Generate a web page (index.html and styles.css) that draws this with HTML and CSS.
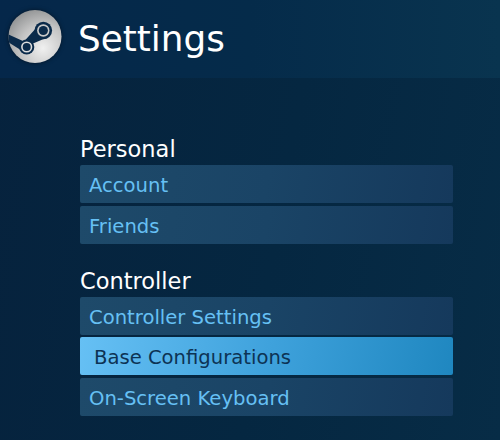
FILE: index.html
```html
<!DOCTYPE html>
<html lang="en">
<head>
<meta charset="utf-8">
<title>Settings</title>
<link rel="stylesheet" href="styles.css">
</head>
<body>
<header class="header">
  <svg class="logo" viewBox="3 7 64 64" aria-hidden="true">
    <defs>
      <radialGradient id="disc" cx="65%" cy="72%" r="80%">
        <stop offset="0" stop-color="#f0f0f0"/>
        <stop offset="0.55" stop-color="#c4c4c4"/>
        <stop offset="1" stop-color="#8d8f90"/>
      </radialGradient>
      <clipPath id="disc-clip">
        <circle cx="35" cy="36.5" r="26.5"/>
      </clipPath>
    </defs>
    <circle cx="35" cy="36.5" r="26.5" fill="url(#disc)"/>
    <g clip-path="url(#disc-clip)">
      <path d="M5 33 L24 41.5 L37 27 L46 38 L33 43.5 L33 50 L20.7 50 L5 40 Z" fill="#0a2a4a"/>
    </g>
    <circle cx="43.3" cy="30.5" r="8.8" fill="#0a2a4a"/>
    <circle cx="43.3" cy="30.5" r="6.2" fill="#c9c9c9"/>
    <circle cx="43.3" cy="30.5" r="4.6" fill="#0a2a4a"/>
    <circle cx="26.7" cy="47" r="7.6" fill="#0a2a4a"/>
    <circle cx="26.7" cy="47" r="5.6" fill="#dedede"/>
    <circle cx="26.7" cy="47" r="4" fill="#0a2a4a"/>
  </svg>
  <h1 class="title">Settings</h1>
</header>
<main class="content">
  <section class="group">
    <h2 class="group-title">Personal</h2>
    <div class="list">
      <div class="item">Account</div>
      <div class="item">Friends</div>
    </div>
  </section>
  <section class="group">
    <h2 class="group-title">Controller</h2>
    <div class="list">
      <div class="item">Controller Settings</div>
      <div class="item item-active">Base Configurations</div>
      <div class="item">On-Screen Keyboard</div>
    </div>
  </section>
</main>
</body>
</html>
```
FILE: styles.css
```css
html, body {
  margin: 0;
  height: 100%;
}
body {
  width: 500px;
  height: 440px;
  overflow: hidden;
  font-family: "DejaVu Sans", sans-serif;
  background: linear-gradient(100deg, #06223d 0%, #052741 55%, #072c46 100%);
}
.header {
  height: 78px;
  display: flex;
  align-items: center;
  background: linear-gradient(90deg, #05274a 0%, #052b4a 50%, #09344f 100%);
}
.logo {
  width: 64px;
  height: 64px;
  margin: 0 0 0 3px;
  flex: none;
  filter: drop-shadow(0 0 2px rgba(0,0,0,.5));
}
.title {
  margin: 0 0 0 11px;
  font-size: 35.8px;
  font-weight: 400;
  line-height: 44px;
  color: #fff;
}
.content {
  padding: 55px 47px 0 80px;
  display: flex;
  flex-direction: column;
  gap: 21px;
}
.group-title {
  margin: 0;
  font-size: 22.5px;
  font-weight: 400;
  line-height: 32px;
  color: #fff;
}
.list {
  display: flex;
  flex-direction: column;
  gap: 2.5px;
}
.item {
  height: 38px;
  box-sizing: border-box;
  padding-left: 9px;
  border-radius: 2px;
  background: linear-gradient(100deg, #1e4a6a 0%, #1a4466 50%, #15395c 100%);
  color: #66c0f4;
  font-size: 19.6px;
  line-height: 41px;
}
.item-active {
  padding-left: 14px;
  background: linear-gradient(100deg, #66c0f4 0%, #3fa2dc 50%, #1f87c0 100%);
  color: #0d3354;
}
```
